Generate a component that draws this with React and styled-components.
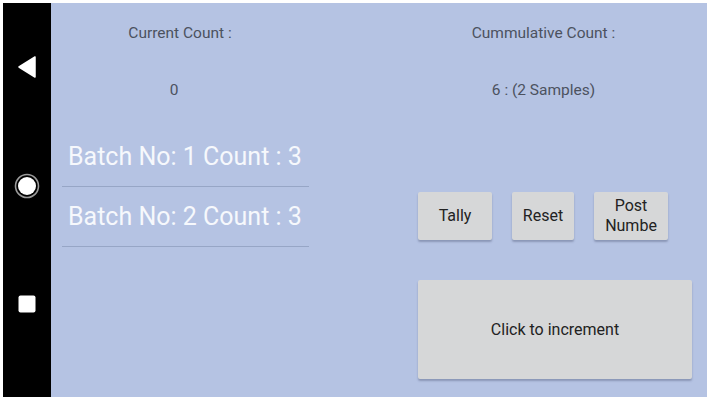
import React from 'react';
import styled, {createGlobalStyle} from "styled-components";

const GlobalStyle = createGlobalStyle`
  html, body {
    margin: 0;
    padding: 0;
    background: #ffffff;
  }
  body {
    font-family: Roboto, "Liberation Sans", sans-serif;
  }
`;

const Frame = styled.div`
  width: 711px;
  height: 400px;
  box-sizing: border-box;
  padding: 3px 4px 3px 3px;
  display: flex;
`;

const NavBar = styled.div`
  width: 48px;
  background: #000000;
  display: flex;
  flex-direction: column;
  align-items: center;
`;

const NavSlot = styled.div`
  height: ${props => props.h}px;
  display: flex;
  align-items: center;
  justify-content: center;
`;

const Screen = styled.div`
  flex: 1;
  background: #b5c3e3;
  display: grid;
  grid-template-columns: 258px 1fr;
`;

const Column = styled.div`
  display: flex;
  flex-direction: column;
  padding-left: ${props => props.$left || 0}px;
`;

const Label = styled.div`
  font-size: 15.5px;
  line-height: 20px;
  color: #4c525f;
  text-align: center;
  margin-top: ${props => props.$top}px;
  padding-right: ${props => props.$shift || 0}px;
`;

const BatchList = styled.div`
  margin: 27px 0 0 11px;
  display: flex;
  flex-direction: column;
`;

const BatchRow = styled.div`
  height: 59px;
  display: flex;
  align-items: center;
  padding-left: 6px;
  border-bottom: 1px solid #97a6c6;
  font-size: 25px;
  color: #f6f8fc;
`;

const ButtonRow = styled.div`
  display: flex;
  gap: 20px;
  margin: 92px 0 0 38px;
`;

const Button = styled.button`
  width: ${props => props.w}px;
  height: ${props => props.h}px;
  border: none;
  border-radius: 2px;
  background: #d6d7d8;
  box-shadow: 0 2px 2px rgba(60, 70, 100, 0.35);
  font-family: Roboto, "Liberation Sans", sans-serif;
  font-size: 16px;
  line-height: 20px;
  color: #222222;
  padding: 0;
  overflow: hidden;
`;

const BigButtonWrap = styled.div`
  margin: 40px 0 0 38px;
`;

const Back = () => (
    <svg width="20" height="24" viewBox="0 0 20 24">
        <path d="M18 2 L18 22 L2 12 Z" fill="#ffffff" stroke="#ffffff" strokeWidth="1.5" strokeLinejoin="round"/>
    </svg>
);

const Home = () => (
    <svg width="28" height="28" viewBox="0 0 28 28">
        <circle cx="14" cy="14" r="11.5" fill="none" stroke="#9a9a9a" strokeWidth="1.6"/>
        <circle cx="14" cy="14" r="9" fill="#ffffff"/>
    </svg>
);

const Recents = () => (
    <svg width="18" height="18" viewBox="0 0 18 18">
        <rect x="0.5" y="0.5" width="17" height="17" rx="2" fill="#ffffff"/>
    </svg>
);

const App = () => {
    const batches = [
        {no: 1, count: 3},
        {no: 2, count: 3},
    ];

    return (
        <>
            <GlobalStyle/>
            <Frame>
                <NavBar>
                    <NavSlot h={128}><Back/></NavSlot>
                    <NavSlot h={110}><Home/></NavSlot>
                    <NavSlot h={126}><Recents/></NavSlot>
                </NavBar>
                <Screen>
                    <Column>
                        <Label $top={20}>Current Count :</Label>
                        <Label $top={37} $shift={12}>0</Label>
                        <BatchList>
                            {batches.map(b => (
                                <BatchRow key={b.no}>Batch No: {b.no} Count : {b.count}</BatchRow>
                            ))}
                        </BatchList>
                    </Column>
                    <Column $left={71}>
                        <Label $top={20}>Cummulative Count :</Label>
                        <Label $top={37}>6 : (2 Samples)</Label>
                        <ButtonRow>
                            <Button w={74} h={48}>Tally</Button>
                            <Button w={62} h={48}>Reset</Button>
                            <Button w={74} h={48}>Post<br/>Numbe</Button>
                        </ButtonRow>
                        <BigButtonWrap>
                            <Button w={274} h={99}>Click to increment</Button>
                        </BigButtonWrap>
                    </Column>
                </Screen>
            </Frame>
        </>
    );
};

export default App;
